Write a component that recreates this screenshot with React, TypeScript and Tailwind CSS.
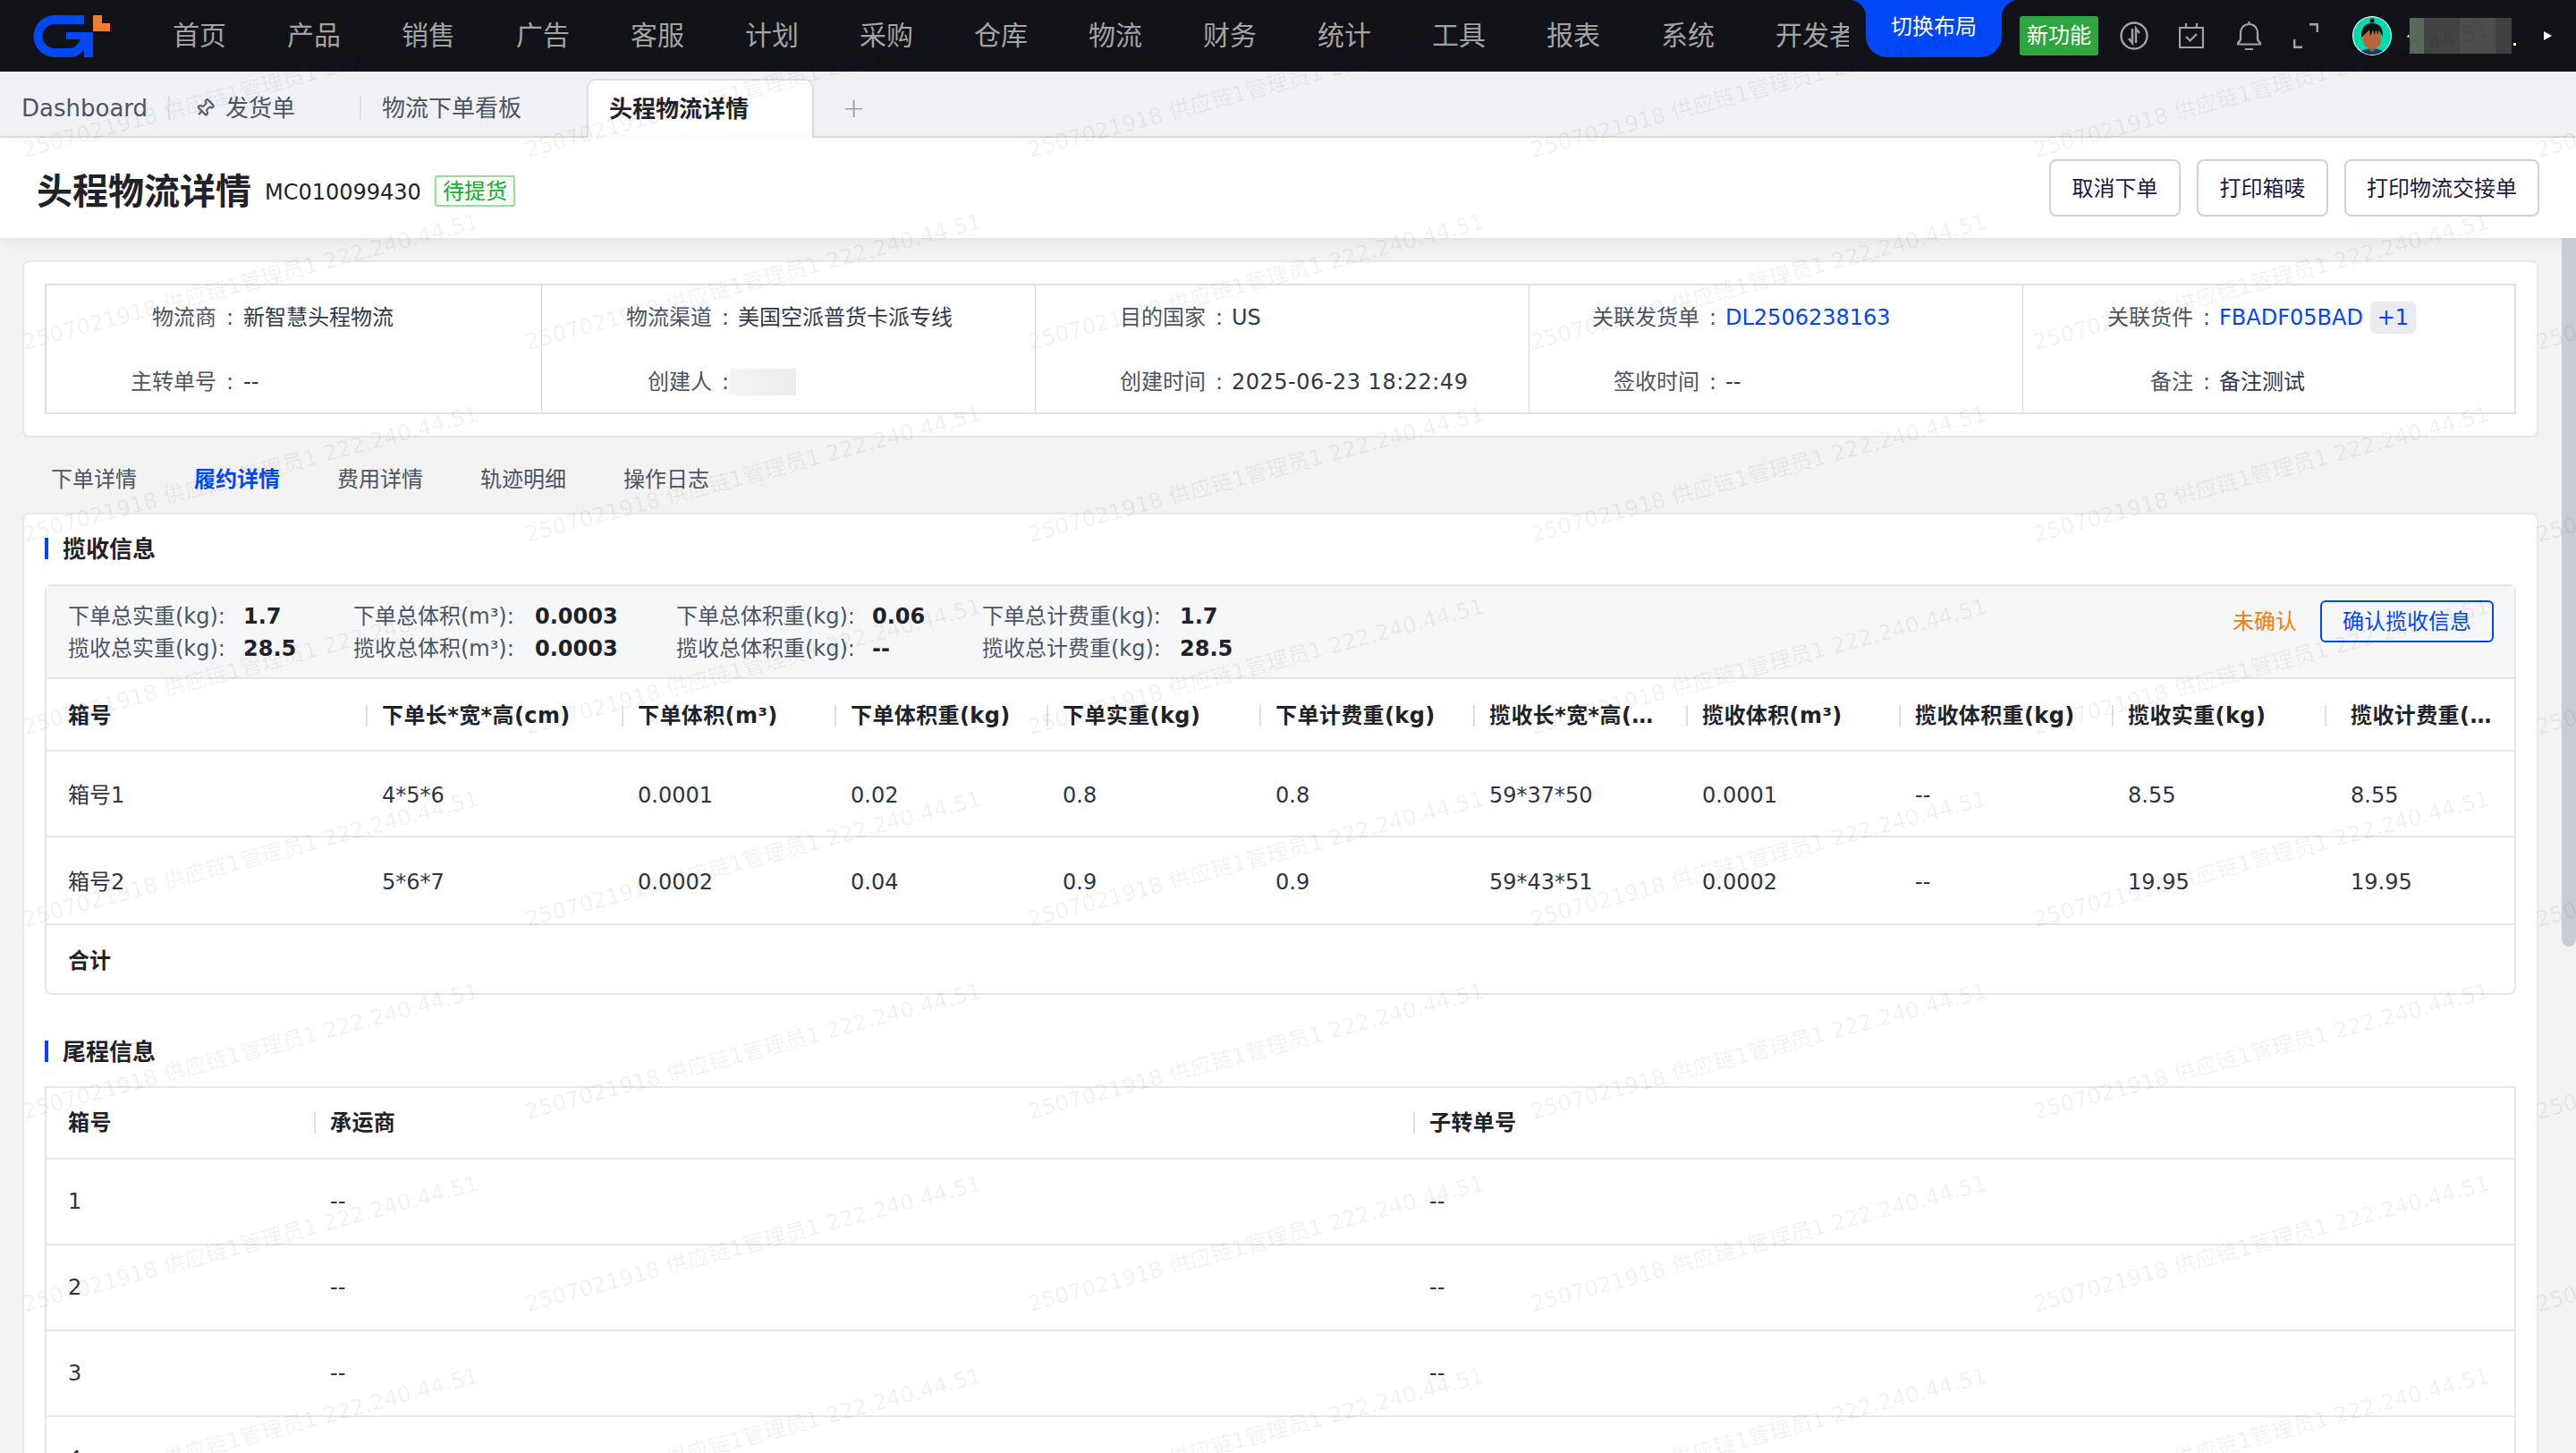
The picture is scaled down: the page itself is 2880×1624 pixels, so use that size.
import { Pin } from "lucide-react";

const navItems = ["首页", "产品", "销售", "广告", "客服", "计划", "采购", "仓库", "物流", "财务", "统计", "工具", "报表", "系统", "开发者"];

const infoCells = [
  [
    { label: "物流商", value: "新智慧头程物流" },
    { label: "主转单号", value: "--" },
  ],
  [
    { label: "物流渠道", value: "美国空派普货卡派专线" },
    { label: "创建人", value: "", blurred: true },
  ],
  [
    { label: "目的国家", value: "US" },
    { label: "创建时间", value: "2025-06-23 18:22:49", wide: true },
  ],
  [
    { label: "关联发货单", value: "DL2506238163", link: true },
    { label: "签收时间", value: "--" },
  ],
  [
    { label: "关联货件", value: "FBADF05BAD", link: true, extra: "+1" },
    { label: "备注", value: "备注测试" },
  ],
];

const detailTabs = ["下单详情", "履约详情", "费用详情", "轨迹明细", "操作日志"];

const stats = [
  ["下单总实重(kg):", "1.7", "下单总体积(m³):", "0.0003", "下单总体积重(kg):", "0.06", "下单总计费重(kg):", "1.7"],
  ["揽收总实重(kg):", "28.5", "揽收总体积(m³):", "0.0003", "揽收总体积重(kg):", "--", "揽收总计费重(kg):", "28.5"],
];

const pickupColumns = "grid-cols-[357px_286px_238px_237px_238px_239px_238px_238px_238px_238px_212px]";

const pickupHead = [
  "箱号",
  "下单长*宽*高(cm)",
  "下单体积(m³)",
  "下单体积重(kg)",
  "下单实重(kg)",
  "下单计费重(kg)",
  "揽收长*宽*高(cm)",
  "揽收体积(m³)",
  "揽收体积重(kg)",
  "揽收实重(kg)",
  "揽收计费重(kg)",
];

const pickupRows = [
  ["箱号1", "4*5*6", "0.0001", "0.02", "0.8", "0.8", "59*37*50", "0.0001", "--", "8.55", "8.55"],
  ["箱号2", "5*6*7", "0.0002", "0.04", "0.9", "0.9", "59*43*51", "0.0002", "--", "19.95", "19.95"],
];

const tailRows = ["1", "2", "3", "4"];

function Logo() {
  return (
    <svg viewBox="37 16 86 47" className="h-[47px] w-[86px] flex-none">
      <path
        d="M94 16H61a23.5 23.5 0 0 0 0 47h17q10 0 16-9v9h10V35H74v8h16q-4 10-14 10H61a13.5 13.5 0 0 1 0-27h33z"
        fill="#0047f5"
      />
      <path d="M104 16h10v9h9v9h-19z" fill="#f07f2f" />
    </svg>
  );
}

function Avatar() {
  return (
    <svg viewBox="0 0 44 44" className="ml-[38px] h-[44px] w-[44px] flex-none">
      <defs>
        <clipPath id="avatar-clip">
          <circle cx="22" cy="22" r="21" />
        </clipPath>
      </defs>
      <circle cx="22" cy="22" r="22" fill="#fff" />
      <g clipPath="url(#avatar-clip)">
        <rect width="44" height="44" fill="#00dcae" />
        <path d="M6 44q2-7 16-8 14 1 16 8z" fill="#1c3a5e" />
        <path d="M18 30h8v7l-4 3-4-3z" fill="#a95e35" />
        <path d="M12 18h20v9q0 9-10 9t-10-9z" fill="#b5673a" />
        <circle cx="22" cy="5" r="2.6" fill="#111" />
        <path d="M10 24q-1-16 12-16t12 16l-2-5-3-3v5l-3-5-1 5-2-5-3 6-1-6-4 3z" fill="#111" />
      </g>
    </svg>
  );
}

function Watermarks() {
  const marks = Array.from({ length: 48 });
  return (
    <div className="pointer-events-none absolute top-[-35px] left-[29px] grid grid-cols-[repeat(6,562px)] auto-rows-[215px]">
      {marks.map((_, i) => (
        <div
          key={i}
          className="origin-[0_100%] -rotate-[15deg] self-end text-[24.4px] leading-[24px] whitespace-nowrap text-black/[0.06]"
        >
          2507021918 供应链1管理员1 222.240.44.51
        </div>
      ))}
    </div>
  );
}

function Header() {
  return (
    <div className="flex h-[80px] flex-none items-center bg-[#111319] pl-[37px]">
      <Logo />
      <div className="ml-[70px] flex w-[1874px] flex-none gap-[68px] overflow-hidden text-[30px] leading-[40px] text-[#a3a3a3]">
        {navItems.map((item) => (
          <span key={item} className="flex-none">
            {item}
          </span>
        ))}
      </div>

      <div className="relative ml-[19px] flex h-[64px] w-[152px] flex-none items-center justify-center self-start rounded-b-[24px] bg-[#0047f5] pb-[4px] text-[24px] text-white">
        <span className="absolute top-0 left-[-20px] h-[20px] w-[20px] bg-[radial-gradient(circle_at_0_100%,#111319_20px,#0047f5_21px)]" />
        <span className="absolute top-0 right-[-20px] h-[20px] w-[20px] bg-[radial-gradient(circle_at_100%_100%,#111319_20px,#0047f5_21px)]" />
        切换布局
      </div>
      <div className="ml-[20px] flex h-[44px] w-[88px] flex-none items-center justify-center rounded-[3px] bg-[#2ea53f] text-[24px] text-white">
        新功能
      </div>

      {/* header icons */}
      <svg viewBox="0 0 32 32" className="ml-[24px] h-[32px] w-[32px] flex-none" fill="none" stroke="#a3a3a3" strokeWidth="2.4">
        <circle cx="16" cy="16" r="14.5" />
        <path d="M14 8v16l-4-5M18 24V8l4 5" strokeWidth="2.4" />
      </svg>
      <svg viewBox="0 0 28 28" className="ml-[34px] h-[28px] w-[28px] flex-none" fill="none" stroke="#a3a3a3" strokeWidth="2.2">
        <path d="M1 5h26v22H1zM8 0v5M20 0v5M8 15l4.500 4.500L20 12" />
      </svg>
      <svg viewBox="0 0 29 32" className="ml-[36px] h-[32px] w-[29px] flex-none" fill="none" stroke="#a3a3a3" strokeWidth="2.2">
        <path d="M14.500 3C8 3 5 8 5 13v6q0 3-3 5v1.500h25V24q-3-2-3-5v-6c0-5-3-10-9.500-10zM14.500 0v3M10 31h9" />
      </svg>
      <svg viewBox="0 0 28 28" className="ml-[35px] h-[28px] w-[28px] flex-none" fill="none" stroke="#a3a3a3" strokeWidth="2.4">
        <path d="M18 1.200h8.800V10M10 26.800H1.200V18" />
      </svg>
      <Avatar />

      {/* blurred user name */}
      <svg viewBox="0 0 4 4" className="ml-[17px] h-[4px] w-[3px] flex-none" fill="#fff">
        <path d="M0 4 2 0l2 4z" />
      </svg>
      <div className="h-[40px] w-[114px] flex-none bg-[linear-gradient(90deg,#566b5c_16px,#424345_16px,#424345_56px,#4c4d4f_56px,#4c4d4f_96px,#3f4042_96px)]" />
      <span className="ml-[2px] h-[3px] w-[3px] flex-none translate-y-[9px] bg-white" />
      <svg viewBox="0 0 9 10" className="ml-[31px] h-[10px] w-[9px] flex-none" fill="#fff">
        <path d="M0 0l9 5-9 5z" />
      </svg>
    </div>
  );
}

function PageTabs() {
  return (
    <div className="flex h-[74px] flex-none items-start border-b-2 border-[#dcdde3] bg-[#f0f1f5] pt-[8px] pl-[24px] text-[26px] text-[#4b5563]">
      <div className="flex h-[66px] w-[164px] flex-none items-center">Dashboard</div>
      <div className="flex h-[66px] w-[214px] flex-none items-center">
        <span className="h-[28px] border-l-2 border-[#dcdde3]" />
        <Pin strokeWidth={2.4} className="ml-[28px] h-[22px] w-[22px] rotate-45 text-[#5b6472]" />
        <span className="ml-[12px]">发货单</span>
      </div>
      <div className="flex h-[66px] w-[254px] flex-none items-center">
        <span className="h-[28px] border-l-2 border-[#dcdde3]" />
        <span className="ml-[23px]">物流下单看板</span>
      </div>
      <div className="relative flex h-[66px] w-[254px] flex-none items-center rounded-t-[10px] border-x-2 border-t-2 border-[#dcdde3] border-b-0 bg-white pl-[23px] font-bold text-[#1f2329]">
        头程物流详情
      </div>
      <div className="ml-[32px] flex h-[64px] items-center text-[30px] font-light text-[#8a8f99]">+</div>
    </div>
  );
}

function TitleBar() {
  return (
    <div className="relative flex h-[112px] flex-none items-center justify-between bg-white pr-[41px] pl-[41px] shadow-[0_4px_14px_rgba(0,0,0,0.07)]">
      <div className="flex items-center pt-[7px]">
        <h1 className="text-[40px] leading-[56px] font-bold text-[#1f2329]">头程物流详情</h1>
        <span className="ml-[15px] pt-[2px] text-[24px] text-[#1f2329]">MC010099430</span>
        <span className="ml-[15px] flex h-[35px] w-[90px] items-center justify-center rounded-[3px] border-2 border-[#97dd9f] bg-[#f8fdf9] text-[24px] text-[#12b028]">
          待提货
        </span>
      </div>
      <div className="flex gap-[18px] text-[24px] text-[#1c1b3f]">
        <button className="h-[64px] w-[147px] rounded-[8px] border-2 border-[#cfd2dc] bg-white pt-[2px]">取消下单</button>
        <button className="h-[64px] w-[147px] rounded-[8px] border-2 border-[#cfd2dc] bg-white pt-[2px]">打印箱唛</button>
        <button className="h-[64px] w-[218px] rounded-[8px] border-2 border-[#cfd2dc] bg-white pt-[2px]">打印物流交接单</button>
      </div>
    </div>
  );
}

function InfoCard() {
  return (
    <div className="flex h-[198px] items-stretch rounded-[8px] border-2 border-[#e8e8ec] bg-white px-[23px] py-[24px]">
      <div className="grid w-full grid-cols-[553px_552px_552px_552px_1fr] border-2 border-[#dfdfe6]">
        {infoCells.map((cell, i) => (
          <div key={i} className={i > 0 ? "border-l border-[#d8d8dc]" : ""}>
            {cell.map((row) => (
              <div key={row.label} className="grid h-[72px] grid-cols-[190px_30px_1fr] items-center text-[24px] text-[#4b5563]">
                <span className="text-right">{row.label}</span>
                <span className="text-center">:</span>
                <span className={`flex items-center text-[#2e3a4b] ${i > 0 ? "-ml-px" : ""} ${row.wide ? "tracking-[0.5px]" : ""}`}>
                  {row.blurred ? (
                    <span className="-ml-[9px] h-[30px] w-[74px] bg-[linear-gradient(90deg,#f4f4f4,#ececec)]" />
                  ) : row.link ? (
                    <span className="text-[#0047f5]">{row.value}</span>
                  ) : (
                    row.value
                  )}
                  {row.extra && (
                    <span className="ml-[8px] flex h-[36px] w-[51px] items-center justify-center rounded-[6px] bg-[#e9ebee] text-[#0047f5]">
                      {row.extra}
                    </span>
                  )}
                </span>
              </div>
            ))}
          </div>
        ))}
      </div>
    </div>
  );
}

function SectionTitle({ title }: { title: string }) {
  return (
    <div className="flex h-[76px] items-center">
      <span className="h-[24px] w-[4px] bg-[#0047f5]" />
      <span className="ml-[16px] pt-[2px] text-[26px] font-bold text-[#1f2329]">{title}</span>
    </div>
  );
}

function HeadCell({ text, first, last }: { text: string; first?: boolean; last?: boolean }) {
  return (
    <div className="flex h-full min-w-0 items-center">
      {!first && <span className="h-[24px] flex-none border-l-2 border-[#dedfe4]" />}
      <span className={`truncate font-bold tracking-[0.4px] ${first ? "pl-[24px]" : last ? "pr-[20px] pl-[27px]" : "pr-[26px] pl-[16px]"}`}>
        {text}
      </span>
    </div>
  );
}

function PickupPanel() {
  return (
    <div className="rounded-[8px] border-2 border-[#e5e6eb]">
      <div className="flex h-[104px] items-start justify-between border-b-2 border-[#e5e6eb] bg-[#f6f7f9] pt-[16px] pl-[24px]">
        <div className="grid grid-cols-[196px_123px_203px_158px_219px_123px_221px_100px] text-[24px] leading-[36px] text-[#4b5563]">
          {stats.map((row) =>
            row.map((text, i) => (
              <span key={i} className={i % 2 ? "font-bold text-[#1f2329]" : ""}>
                {text}
              </span>
            )),
          )}
        </div>
        <div className="mr-[23px] flex items-center gap-[26px] text-[24px]">
          <span className="text-[#ff7a00]">未确认</span>
          <button className="h-[47px] w-[194px] rounded-[6px] border-2 border-[#0047f5] text-[#0047f5]">确认揽收信息</button>
        </div>
      </div>

      <div className={`grid h-[81px] ${pickupColumns} border-b-2 border-[#e5e6eb] pt-[2px] text-[24px] text-[#1f2329]`}>
        {pickupHead.map((text, i) => (
          <HeadCell key={text} text={text} first={i === 0} last={i === pickupHead.length - 1} />
        ))}
      </div>
      {pickupRows.map((row, r) => (
        <div
          key={r}
          className={`grid ${r === 0 ? "h-[96px]" : "h-[98px]"} ${pickupColumns} items-center border-b-2 border-[#e5e6eb] pt-[3px] text-[24px] text-[#2f3542]`}
        >
          {row.map((text, i) => (
            <span key={i} className={i === 0 ? "pl-[24px]" : i === 10 ? "pl-[29px]" : "pl-[18px]"}>
              {text}
            </span>
          ))}
        </div>
      ))}
      <div className="flex h-[76px] items-center pt-[3px] pl-[24px] text-[24px] font-bold text-[#1f2329]">合计</div>
    </div>
  );
}

function TailPanel() {
  return (
    <div className="border-2 border-b-0 border-[#e5e6eb]">
      <div className="grid h-[80px] grid-cols-[299px_1229px_1fr] border-b-2 border-[#e5e6eb] text-[24px] text-[#1f2329]">
        <HeadCell text="箱号" first />
        <HeadCell text="承运商" />
        <HeadCell text="子转单号" />
      </div>
      {tailRows.map((row) => (
        <div
          key={row}
          className="grid h-[96px] grid-cols-[299px_1229px_1fr] items-center border-b-2 border-[#e5e6eb] text-[24px] text-[#2f3542]"
        >
          <span className="pl-[24px]">{row}</span>
          <span className="pl-[18px]">--</span>
          <span className="pl-[18px]">--</span>
        </div>
      ))}
    </div>
  );
}

export default function App() {
  return (
    <div className="relative flex h-[1624px] w-[2880px] flex-col overflow-hidden bg-[#f2f2f2] font-['DejaVu_Sans','Noto_Sans_CJK_SC',sans-serif]">
      <Header />
      <PageTabs />
      <TitleBar />

      <div className="relative pt-[25px] pr-[42px] pl-[25px]">
        <InfoCard />

        {/* detail tabs */}
        <div className="flex h-[84px] items-center gap-[64px] pt-[10px] pl-[32px] text-[24px] text-[#4b5563]">
          {detailTabs.map((tab) => (
            <span key={tab} className={tab === "履约详情" ? "font-bold text-[#0047f5]" : ""}>
              {tab}
            </span>
          ))}
        </div>

        <div className="rounded-t-[8px] border-2 border-[#e8e8ec] bg-white px-[23px]">
          <SectionTitle title="揽收信息" />
          <div className="mt-[2px]">
            <PickupPanel />
          </div>
          <div className="mt-[25px]">
            <SectionTitle title="尾程信息" />
          </div>
          <div className="mt-[1px]">
            <TailPanel />
          </div>
        </div>
      </div>

      {/* scrollbar thumb */}
      <div className="absolute top-[266px] right-0 h-[792px] w-[16px] rounded-b-[8px] bg-[#c9ccd5]" />

      <Watermarks />
    </div>
  );
}
